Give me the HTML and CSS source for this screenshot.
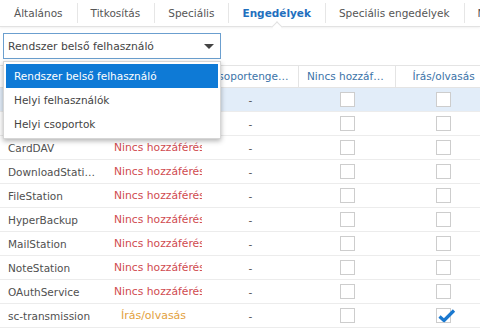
FILE: index.html
```html
<!DOCTYPE html>
<html lang="hu">
<head>
    <meta charset="UTF-8">
    <title>Engedélyek</title>
    <link rel="stylesheet" href="styles.css">
</head>
<body>
    <div class="tabs">
        <div class="tab">Általános</div>
        <div class="tab">Titkosítás</div>
        <div class="tab">Speciális</div>
        <div class="tab active">Engedélyek</div>
        <div class="tab">Speciális engedélyek</div>
        <div class="tab">NFS engedélyek</div>
    </div>

    <div class="toolbar">
        <div class="select">
            <span>Rendszer belső felhasználó</span>
            <span class="caret"></span>
        </div>
    </div>

    <div class="grid">
        <div class="row head">
            <div class="cell name">Név</div>
            <div class="cell perm">Előnézet</div>
            <div class="cell center ellipsis">Csoportengedélyek</div>
            <div class="cell center ellipsis">Nincs hozzáférés</div>
            <div class="cell center">Írás/olvasás</div>
        </div>
        <div class="row selected">
            <div class="cell name">admin</div>
            <div class="cell perm deny">Nincs hozzáférés</div>
            <div class="cell center">-</div>
            <div class="cell center"><span class="check"></span></div>
            <div class="cell center"><span class="check"></span></div>
        </div>
        <div class="row">
            <div class="cell name">AudioStation</div>
            <div class="cell perm deny">Nincs hozzáférés</div>
            <div class="cell center">-</div>
            <div class="cell center"><span class="check"></span></div>
            <div class="cell center"><span class="check"></span></div>
        </div>
        <div class="row">
            <div class="cell name">CardDAV</div>
            <div class="cell perm deny">Nincs hozzáférés</div>
            <div class="cell center">-</div>
            <div class="cell center"><span class="check"></span></div>
            <div class="cell center"><span class="check"></span></div>
        </div>
        <div class="row">
            <div class="cell name">DownloadStation</div>
            <div class="cell perm deny">Nincs hozzáférés</div>
            <div class="cell center">-</div>
            <div class="cell center"><span class="check"></span></div>
            <div class="cell center"><span class="check"></span></div>
        </div>
        <div class="row">
            <div class="cell name">FileStation</div>
            <div class="cell perm deny">Nincs hozzáférés</div>
            <div class="cell center">-</div>
            <div class="cell center"><span class="check"></span></div>
            <div class="cell center"><span class="check"></span></div>
        </div>
        <div class="row">
            <div class="cell name">HyperBackup</div>
            <div class="cell perm deny">Nincs hozzáférés</div>
            <div class="cell center">-</div>
            <div class="cell center"><span class="check"></span></div>
            <div class="cell center"><span class="check"></span></div>
        </div>
        <div class="row">
            <div class="cell name">MailStation</div>
            <div class="cell perm deny">Nincs hozzáférés</div>
            <div class="cell center">-</div>
            <div class="cell center"><span class="check"></span></div>
            <div class="cell center"><span class="check"></span></div>
        </div>
        <div class="row">
            <div class="cell name">NoteStation</div>
            <div class="cell perm deny">Nincs hozzáférés</div>
            <div class="cell center">-</div>
            <div class="cell center"><span class="check"></span></div>
            <div class="cell center"><span class="check"></span></div>
        </div>
        <div class="row">
            <div class="cell name">OAuthService</div>
            <div class="cell perm deny">Nincs hozzáférés</div>
            <div class="cell center">-</div>
            <div class="cell center"><span class="check"></span></div>
            <div class="cell center"><span class="check"></span></div>
        </div>
        <div class="row">
            <div class="cell name">sc-transmission</div>
            <div class="cell perm center rw">Írás/olvasás</div>
            <div class="cell center">-</div>
            <div class="cell center"><span class="check"></span></div>
            <div class="cell center">
                <span class="check on">
                    <svg width="20" height="16" viewBox="0 0 20 16"><path d="M2.5 8.5 L7 12.5 L17 2.5" fill="none" stroke="#1a78cf" stroke-width="3.2" stroke-linejoin="round"/></svg>
                </span>
            </div>
        </div>
    </div>

    <div class="menu">
        <div class="item current">Rendszer belső felhasználó</div>
        <div class="item">Helyi felhasználók</div>
        <div class="item">Helyi csoportok</div>
    </div>
</body>
</html>
```

FILE: styles.css
```css
body {
    margin: 0;
    width: 480px;
    height: 329px;
    overflow: hidden;
    position: relative;
    font-family: "DejaVu Sans", Verdana, sans-serif;
    font-size: 10.5px;
    color: #505050;
    background: #fff;
}
.tabs {
    display: flex;
    height: 26px;
    border-bottom: 1px solid #e2e2e2;
    box-shadow: 0 1px 2px rgba(0, 0, 0, 0.06);
    white-space: nowrap;
}
.tab {
    position: relative;
    padding: 0 14px;
    line-height: 26px;
    color: #555;
}
.tab + .tab::before {
    content: "";
    position: absolute;
    left: 0;
    top: 3px;
    bottom: 3px;
    border-left: 1px solid #e6e6e6;
}
.tab.active {
    color: #1f6fbe;
    font-weight: bold;
}
.tab.active::after {
    content: "";
    position: absolute;
    left: 50%;
    bottom: -5px;
    width: 7px;
    height: 7px;
    margin-left: -4px;
    background: #fff;
    border-top: 1px solid #e2e2e2;
    border-left: 1px solid #e2e2e2;
    transform: rotate(45deg);
}
.toolbar {
    padding: 6px 3px;
}
.select {
    box-sizing: border-box;
    display: flex;
    align-items: center;
    justify-content: space-between;
    width: 218px;
    height: 26px;
    padding: 0 6px 0 4px;
    border: 1px solid #6b9fcf;
    color: #444;
    font-size: 10.75px;
}
.caret {
    width: 0;
    height: 0;
    border-left: 5px solid transparent;
    border-right: 5px solid transparent;
    border-top: 5px solid #444;
}
.grid {
    width: 490px;
}
.row {
    display: grid;
    grid-template-columns: 107px 95px 96px 97px 95px;
    box-sizing: border-box;
    height: 24px;
    border-bottom: 1px solid #ececec;
    align-items: center;
}
.row.head {
    height: 23px;
    border-top: 1px solid #e4e4e4;
    border-bottom: 1px solid #e4e4e4;
    color: #3b73a8;
}
.row.head .cell {
    height: 100%;
    line-height: 21px;
}
.row.head .cell + .cell {
    border-left: 1px solid #e4e4e4;
}
.row.selected {
    background: #e2edf9;
}
.cell {
    padding: 0 7px 0 8px;
    white-space: nowrap;
    overflow: hidden;
}
.name {
    padding-right: 11px;
    text-overflow: ellipsis;
}
.ellipsis {
    text-overflow: ellipsis;
}
.perm {
    padding: 0 9px 0 7px;
}
.center {
    text-align: center;
}
.deny {
    padding-right: 0;
    font-size: 10.75px;
    color: #d04a4f;
}
.rw {
    font-size: 11px;
    color: #e3a13e;
}
.check {
    display: inline-block;
    position: relative;
    width: 15px;
    height: 15px;
    box-sizing: border-box;
    border: 1px solid #cdcdcd;
    background: #fff;
    vertical-align: middle;
}
.check svg {
    position: absolute;
    left: 0;
    top: -1px;
}
.menu {
    position: absolute;
    top: 61px;
    left: 3px;
    width: 218px;
    box-sizing: border-box;
    padding: 2px;
    background: #fff;
    border: 1px solid #d6d6d6;
    box-shadow: 0 2px 5px rgba(0, 0, 0, 0.3);
}
.item {
    height: 24px;
    line-height: 24px;
    padding-left: 8px;
    color: #444;
}
.item.current {
    background: #0e7ad6;
    color: #fff;
}
```
